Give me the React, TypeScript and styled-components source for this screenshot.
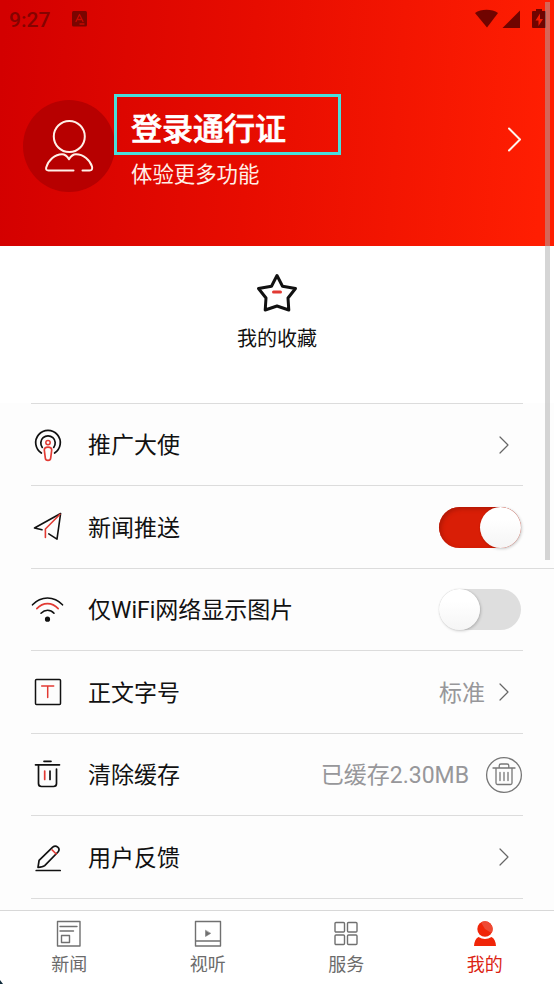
import React, { ReactNode, useState } from "react";
import styled, { createGlobalStyle } from "styled-components";

const Global = createGlobalStyle`
  * { box-sizing: border-box; }
  body { margin: 0; background: #fff; }
`;

const Screen = styled.main`
  position: relative;
  display: flex;
  flex-direction: column;
  width: 554px;
  height: 984px;
  overflow: hidden;
  background: #fdfdfd;
  color: #111;
  font-family: Roboto, "Noto Sans CJK SC", sans-serif;
`;

const Header = styled.header`
  flex: none;
  height: 246px;
  background: linear-gradient(94deg, #d30000 1%, #e70c00 45%, #ff1e02 97%);
`;

const StatusBar = styled.div`
  display: flex;
  align-items: center;
  height: 38px;
  padding: 0 8px 0 9px;
  color: #7a0500;
`;

const Clock = styled.span`
  width: 63px;
  padding-top: 1px;
  font-size: 21px;
  font-weight: 500;
  line-height: 38px;
  color: #850300;
`;

const StatusIcons = styled.div`
  display: flex;
  margin-left: auto;
`;

const Profile = styled.div`
  display: flex;
  align-items: flex-start;
  height: 208px;
  padding: 56px 31px 0 23px;
`;

const Avatar = styled.div`
  flex: none;
  width: 92px;
  height: 92px;
  margin-top: 6px;
  border-radius: 50%;
  background: #b70000;
`;

const ProfileText = styled.div`
  flex: none;
  width: 227px;
  margin-left: -1px;
`;

const LoginTitle = styled.h1`
  position: relative;
  height: 61px;
  margin: 0;
  padding: 3px 0 0 14px;
  border: 3px solid #48dfdc;
  color: #fff;
  font-size: 31px;
  font-weight: 500;
  -webkit-text-stroke: 0.7px #fff;
  line-height: 60px;
  white-space: nowrap;
`;

const Subtitle = styled.p`
  margin: 0;
  padding: 2px 0 0 17px;
  color: #fff0e8;
  font-size: 21.4px;
  line-height: 36px;
`;

const HeaderArrow = styled.div`
  display: flex;
  margin: 33px 0 0 auto;
`;

const Favorites = styled.section`
  display: flex;
  flex: none;
  flex-direction: column;
  align-items: center;
  height: 157px;
  padding-top: 25px;
  background: #fff;
  font-size: 20px;
  line-height: 30px;
`;

const FavoriteLabel = styled.span`
  margin-top: 9px;
`;

const Settings = styled.section`
  flex: 1;
  min-height: 0;
  padding-left: 31px;
  overflow: hidden;
`;

const Row = styled.div<{ $wide?: boolean }>`
  display: flex;
  align-items: center;
  width: ${(p) => (p.$wide ? 523 : 492)}px;
  height: 82.48px;
  padding-right: ${(p) => (p.$wide ? 31 : 0)}px;
  border-top: 1px solid #dcdcdc;
`;

const RowIcon = styled.div`
  display: flex;
  width: 57px;
  margin-left: -1px;
`;

const RowLabel = styled.span`
  margin-left: 1px;
  padding-top: 3px;
  font-size: 23px;
  line-height: 34px;
`;

const RowEnd = styled.div<{ $inset?: number }>`
  display: flex;
  align-items: center;
  margin-left: auto;
  padding-right: ${(p) => p.$inset ?? 0}px;
`;

const Value = styled.span<{ $gap: number }>`
  margin-right: ${(p) => p.$gap}px;
  padding-top: 3px;
  color: #97979a;
  font-size: 23px;
  line-height: 34px;
`;

const Track = styled.button<{ $on: boolean }>`
  display: flex;
  justify-content: ${(p) => (p.$on ? "flex-end" : "flex-start")};
  width: 82px;
  height: 41px;
  margin-right: 2px;
  padding: 0;
  border: 0;
  border-radius: 21px;
  background: ${(p) => (p.$on ? "#d91e06" : "#dedede")};
  box-shadow: ${(p) => (p.$on ? "inset 2px 2px 4px #b01806" : "none")};
`;

const Knob = styled.span`
  width: 41px;
  height: 41px;
  border-radius: 50%;
  background: linear-gradient(#fff 30%, #f5f5f5);
  box-shadow: 1px 1px 3px rgba(0, 0, 0, 0.2), 0 0 1px rgba(0, 0, 0, 0.2);
`;

const TabBar = styled.nav`
  display: grid;
  flex: none;
  grid-template-columns: repeat(4, 1fr);
  height: 74px;
  border-top: 1px solid #d8d8d8;
  background: #fff;
`;

const Tab = styled.div<{ $active?: boolean }>`
  display: flex;
  flex-direction: column;
  align-items: center;
  gap: 2px;
  padding-top: 8px;
  color: ${(p) => (p.$active ? "#db2413" : "#6b6b6b")};
  font-size: 18px;
  line-height: 28px;
`;

const ScrollThumb = styled.div`
  position: absolute;
  top: 2px;
  right: 4px;
  width: 5px;
  height: 558px;
  background: rgba(172, 172, 172, 0.5);
`;

const Corner = styled.svg`
  position: absolute;
  bottom: 0;
  left: 0;
`;

const Drawing = styled.svg`
  display: block;
  flex: none;
  fill: none;
  stroke-linecap: round;
  stroke-linejoin: round;
`;

function Icon({ w, h, stroke = "#111", sw = 1.6, children }: { w: number; h: number; stroke?: string; sw?: number; children: ReactNode }) {
  return (
    <Drawing width={w} height={h} viewBox={`0 0 ${w} ${h}`} stroke={stroke} strokeWidth={sw}>
      {children}
    </Drawing>
  );
}

const RED = "#e23a33";

const Chevron = () => (
  <Icon w={10} h={18} stroke="#666" sw={1.2}>
    <path d="M1 1l8 8-8 8" />
  </Icon>
);

function Toggle({ initial }: { initial: boolean }) {
  const [on, setOn] = useState(initial);
  return (
    <Track $on={on} role="switch" aria-checked={on} onClick={() => setOn(!on)}>
      <Knob />
    </Track>
  );
}

const podcast = (
  <Icon w={36} h={36} sw={1.7}>
    <path d="M11.4 26A12.3 12.3 0 1 1 24.6 26" />
    <path d="M12.3 20.4A7.2 7.2 0 1 1 23.7 20.4" />
    <circle cx="18" cy="15.6" r="2.2" stroke={RED} strokeWidth="1.5" />
    <path d="M14.3 23c0-2 1.3-2.9 3.7-2.9s3.7.9 3.7 2.9l-1 8c-.3 3.2-5.1 3.2-5.4 0z" stroke={RED} />
  </Icon>
);

const plane = (
  <Icon w={36} h={36}>
    <path d="M12 20.7L4.500 19 30.600 4.500 27 30.100l-8.200-5.200" />
    <path d="M30 5.300L15.400 20V28.500" stroke={RED} />
  </Icon>
);

const wifi = (
  <Icon w={36} h={36}>
    <path d="M2.5 12.8C11 3.800 24 3.800 32.5 12.8" />
    <path d="M6.8 16.600C13 10 22 10 28.2 16.600" stroke={RED} />
    <path d="M11 21.200c4-4 9.4-4 13 0" />
    <circle cx="17.5" cy="27.2" r="1.800" fill="#111" stroke="#111" />
  </Icon>
);

const fontSize = (
  <Icon w={36} h={36} sw={1.5}>
    <rect x="5.5" y="5.6" width="25" height="25" rx="1" />
    <path d="M11.7 12h12M17.7 12v11.5" stroke={RED} />
  </Icon>
);

const trash = (
  <Icon w={36} h={36} sw={1.7}>
    <path d="M14 4.300h7M5.5 7.8h24M8.5 8v18.5q0 3 3 3h12q3 0 3-3V12" />
    <path d="M14.7 14v8.5" stroke={RED} />
    <path d="M20 14v8.5" />
  </Icon>
);

const pencil = (
  <Icon w={36} h={36} sw={1.7}>
    <path d="M6.2 31.5h24M8 28.3l1.1-7L22.7 8.100c3.3-2.8 8.3 1 5.3 4.9L14.7 26.7Q12.8 28.3 8 28.3z" />
    <path d="M22.2 11l4 4" stroke={RED} />
  </Icon>
);

const trashRound = (
  <Icon w={38} h={38} stroke="#777" sw={1.3}>
    <circle cx="19" cy="19" r="17.4" />
    <path d="M8 12h22M14.2 12V9.8q0-1.8 1.8-1.8h6q1.8 0 1.8 1.8V12M11 12.5V27q0 1.5 1.5 1.5h13Q27 28.500 27 27V12.500M15 16.500v8M19 16.500v8M23 16.500v8" />
  </Icon>
);

interface Setting {
  icon: ReactNode;
  label: string;
  end: ReactNode;
  inset?: number;
  wide?: boolean;
}

const settings: Setting[] = [
  { icon: podcast, label: "推广大使", end: <Chevron />, inset: 14 },
  { icon: plane, label: "新闻推送", end: <Toggle initial /> },
  { icon: wifi, label: "仅WiFi网络显示图片", end: <Toggle initial={false} />, wide: true },
  { icon: fontSize, label: "正文字号", end: <><Value $gap={14}>标准</Value><Chevron /></>, inset: 14 },
  { icon: trash, label: "清除缓存", end: <><Value $gap={16}>已缓存2.30MB</Value>{trashRound}</> },
  { icon: pencil, label: "用户反馈", end: <Chevron />, inset: 14 },
];

export default function App() {
  return (
    <>
      <Global />
      <Screen>
        <Header>
          <StatusBar>
            <Clock>9:27</Clock>
            <Icon w={15} h={16} stroke="none">
              <rect width="15" height="15.500" rx="1.500" fill="#7a0500" />
              <path d="M4 10.500L7.500 3.500 11 10.500M6 8.500h3M8 13h4" stroke="#c80800" strokeWidth="1.300" />
            </Icon>
            <StatusIcons>
              <Icon w={71} h={20} stroke="none">
                <path d="M0 4C6-.2 17-.2 23 4L12 18.500z" fill="#700400" />
                <path d="M45 1.500V19H27.500z" fill="#700400" />
                <path d="M58 2h3V0h6v2h3q1 0 1 1v15q0 1-1 1H58q-1 0-1-1V3q0-1 1-1z" fill="#700400" />
                <path d="M65 4.500l-4.500 7h3v5.500l4.500-7h-3z" fill="#f51a02" />
              </Icon>
            </StatusIcons>
          </StatusBar>
          <Profile>
            <Avatar>
              <Icon w={92} h={92} stroke="#fff0e8" sw={2}>
                <circle cx="46.300" cy="36.500" r="15.500" />
                <path d="M50.500 70.500H25.500Q22.500 70.500 23.200 67.500C25.500 60 32 54.300 39 54.300Q43 54.300 46 59.300Q49 54.300 53 54.300C60.500 54.300 67 60 69 66.500Q70 70.500 66.500 70.500H59.500" />
              </Icon>
            </Avatar>
            <ProfileText>
              <LoginTitle>登录通行证</LoginTitle>
              <Subtitle>体验更多功能</Subtitle>
            </ProfileText>
            <HeaderArrow>
              <Icon w={16} h={25} stroke="#fff3ed" sw={2}>
                <path d="M2 1.500L13 12.500 2 23.500" />
              </Icon>
            </HeaderArrow>
          </Profile>
        </Header>

        <Favorites>
          <Icon w={44} h={44} sw={3}>
            <path d="M22 4.500l5.500 10.700L40.500 17.500 33 27 33.800 39 22 35 10.200 39 11 27 3.500 17.500 16.500 15.200z" />
            <path d="M18.500 21h7" stroke={RED} />
          </Icon>
          <FavoriteLabel>我的收藏</FavoriteLabel>
        </Favorites>

        <Settings>
          {settings.map((s) => (
            <Row key={s.label} $wide={s.wide}>
              <RowIcon>{s.icon}</RowIcon>
              <RowLabel>{s.label}</RowLabel>
              <RowEnd $inset={s.inset}>{s.end}</RowEnd>
            </Row>
          ))}
          <Row />
        </Settings>

        <TabBar>
          <Tab>
            <Icon w={28} h={30} stroke="#707070" sw={1.4}>
              <rect x="2.500" y="2.500" width="22.500" height="24.500" />
              <path d="M5 7.500h17M5 12h13.500M6.500 16.500h8v7h-8z" />
            </Icon>
            新闻
          </Tab>
          <Tab>
            <Icon w={28} h={30} stroke="#707070" sw={1.4}>
              <path d="M1.500 2.500h25V27h-25zM1.500 22h25" />
              <path d="M11.500 11.500v6l5-3z" fill="#707070" stroke="#707070" strokeWidth="0.500" />
            </Icon>
            视听
          </Tab>
          <Tab>
            <Icon w={28} h={30} stroke="#707070" sw={1.4}>
              <rect x="3" y="3.500" width="9.500" height="9.500" rx="1" />
              <rect x="15.500" y="3.500" width="9.500" height="9.500" rx="1" />
              <rect x="3" y="16" width="9.500" height="9.500" rx="1" />
              <rect x="15.500" y="16" width="9.500" height="9.500" rx="1" />
            </Icon>
            服务
          </Tab>
          <Tab $active>
            <Icon w={28} h={30} stroke="none">
              <circle cx="14" cy="10" r="7.700" fill="#f02508" />
              <path d="M14 10L10 3.500A7.700 7.700 0 0 1 20.500 14z" fill="#ee4a34" />
              <path d="M7.500 18q6.500 4 13 0 4 2 4.500 9H3Q3.500 20 7.500 18z" fill="#f02508" />
            </Icon>
            我的
          </Tab>
        </TabBar>
        <ScrollThumb />
        <Corner width="3" height="4" viewBox="0 0 3 4">
          <path d="M0 0v4h3z" fill="#102b3b" />
        </Corner>
      </Screen>
    </>
  );
}
